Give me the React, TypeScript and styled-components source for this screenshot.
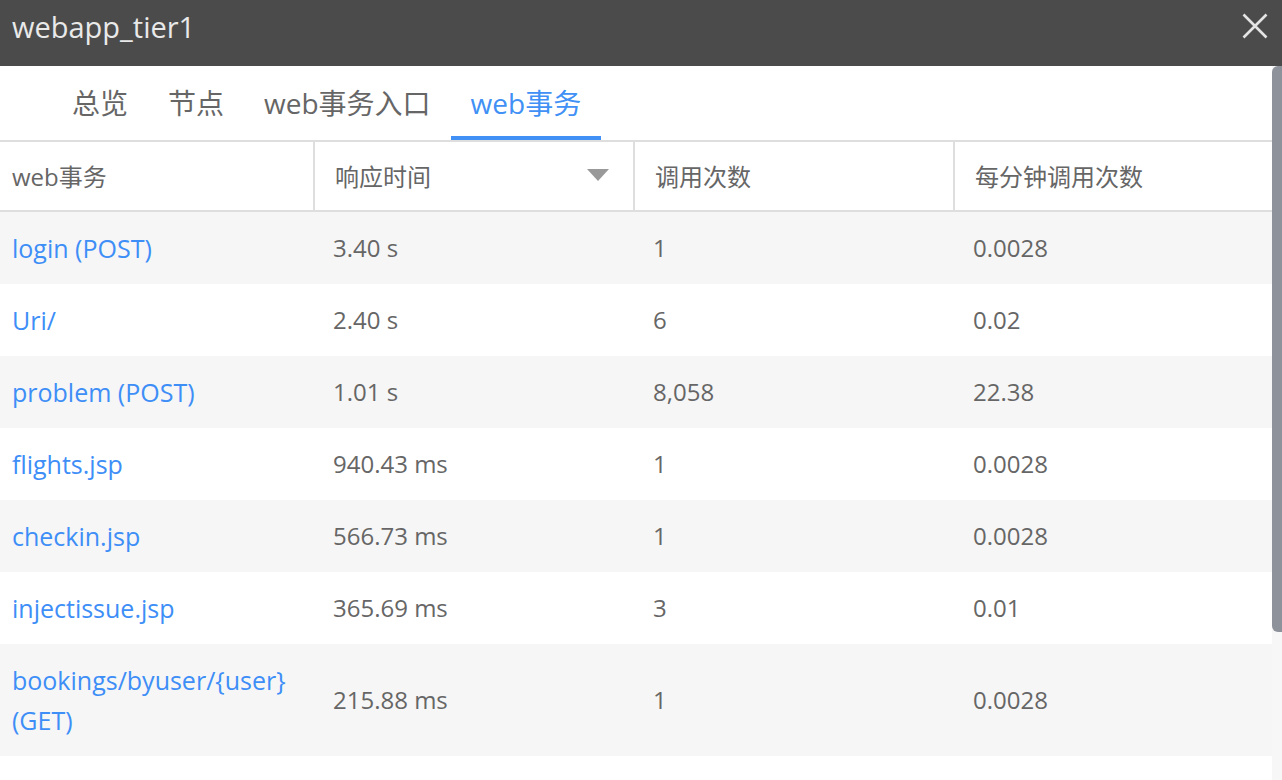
import React from "react";
import styled, { createGlobalStyle } from "styled-components";

const Global = createGlobalStyle`
  html, body { margin: 0; padding: 0; background: #fff; overflow: hidden; }
  * { box-sizing: border-box; }
`;

const FONT = `"Open Sans", "Noto Sans CJK SC", sans-serif`;

const Page = styled.div`
  width: 1282px;
  height: 780px;
  display: flex;
  flex-direction: column;
  overflow: hidden;
  font-family: ${FONT};
  color: #666;
`;

const TitleBar = styled.div`
  height: 66px;
  flex: none;
  background: #4b4b4b;
  display: flex;
  align-items: flex-start;
  justify-content: space-between;
  padding: 7px 14px 0 12px;
`;

const Title = styled.div`
  font-size: 29px;
  line-height: 40px;
  color: #e9e9e9;
`;

const CloseButton = styled.div`
  width: 26px;
  height: 26px;
  margin-top: 6px;
  display: flex;
  align-items: center;
  justify-content: center;
`;

const Body = styled.div`
  flex: 1;
  min-height: 0;
  display: flex;
`;

const Main = styled.div`
  flex: 1;
  min-width: 0;
  overflow: hidden;
  display: flex;
  flex-direction: column;
`;

const Track = styled.div`
  width: 10px;
  flex: none;
  background: #f7f7f7;
`;

const Thumb = styled.div`
  height: 566px;
  background: #8d929b;
  border-radius: 6px 0 0 6px;
`;

const TabBar = styled.div`
  height: 76px;
  flex: none;
  display: flex;
  padding-left: 52px;
  border-bottom: 2px solid #dedede;
`;

const Tab = styled.div<{ $active?: boolean }>`
  padding: 2px 20px 0;
  display: flex;
  align-items: center;
  font-size: 28px;
  color: ${(p) => (p.$active ? "#4090f5" : "#666")};
  border-bottom: 4px solid ${(p) => (p.$active ? "#4090f5" : "transparent")};
`;

const Grid = styled.div`
  display: grid;
  grid-template-columns: 313px 320px 320px 1fr;
`;

const HeaderRow = styled(Grid)`
  height: 70px;
  border-bottom: 2px solid #dedede;
`;

const HeaderCell = styled.div<{ $first?: boolean }>`
  display: flex;
  align-items: center;
  justify-content: space-between;
  padding: 0 24px 2px ${(p) => (p.$first ? "12px" : "20px")};
  border-left: ${(p) => (p.$first ? "none" : "2px solid #dedede")};
  font-size: 24px;
  color: #666;
`;

const SortArrow = styled.span`
  width: 0;
  height: 0;
  border-left: 11px solid transparent;
  border-right: 11px solid transparent;
  border-top: 12px solid #999;
`;

const Row = styled(Grid)<{ $striped?: boolean }>`
  background: ${(p) => (p.$striped ? "#f6f6f6" : "#fff")};
`;

const Cell = styled.div<{ $first?: boolean; $link?: boolean }>`
  display: flex;
  align-items: center;
  padding: 16px 20px 16px ${(p) => (p.$first ? "12px" : "20px")};
  min-height: 72px;
  font-size: ${(p) => (p.$link ? "25px" : "24px")};
  line-height: 40px;
  color: ${(p) => (p.$link ? "#3e8ef7" : "#666")};
  word-break: break-word;
`;

const rows = [
  { name: "login (POST)", time: "3.40 s", calls: "1", perMin: "0.0028" },
  { name: "Uri/", time: "2.40 s", calls: "6", perMin: "0.02" },
  { name: "problem (POST)", time: "1.01 s", calls: "8,058", perMin: "22.38" },
  { name: "flights.jsp", time: "940.43 ms", calls: "1", perMin: "0.0028" },
  { name: "checkin.jsp", time: "566.73 ms", calls: "1", perMin: "0.0028" },
  { name: "injectissue.jsp", time: "365.69 ms", calls: "3", perMin: "0.01" },
  { name: "bookings/byuser/{user} (GET)", time: "215.88 ms", calls: "1", perMin: "0.0028" },
];

const tabs = ["总览", "节点", "web事务入口", "web事务"];

export default function App() {
  return (
    <Page>
      <Global />
      <TitleBar>
        <Title>webapp_tier1</Title>
        <CloseButton>
          <svg width="26" height="26" viewBox="0 0 26 26">
            <path d="M1.5 1.5 L24.5 24.5 M24.5 1.5 L1.5 24.5" stroke="#e4e4e4" strokeWidth="2.6" fill="none" />
          </svg>
        </CloseButton>
      </TitleBar>
      <Body>
        <Main>
          <TabBar>
            {tabs.map((t, i) => (
              <Tab key={t} $active={i === 3}>
                {t}
              </Tab>
            ))}
          </TabBar>
          <HeaderRow>
            <HeaderCell $first>web事务</HeaderCell>
            <HeaderCell>
              响应时间
              <SortArrow />
            </HeaderCell>
            <HeaderCell>调用次数</HeaderCell>
            <HeaderCell>每分钟调用次数</HeaderCell>
          </HeaderRow>
          {rows.map((r, i) => (
            <Row key={r.name} $striped={i % 2 === 0}>
              <Cell $first $link>
                {r.name}
              </Cell>
              <Cell>{r.time}</Cell>
              <Cell>{r.calls}</Cell>
              <Cell>{r.perMin}</Cell>
            </Row>
          ))}
        </Main>
        <Track>
          <Thumb />
        </Track>
      </Body>
    </Page>
  );
}
